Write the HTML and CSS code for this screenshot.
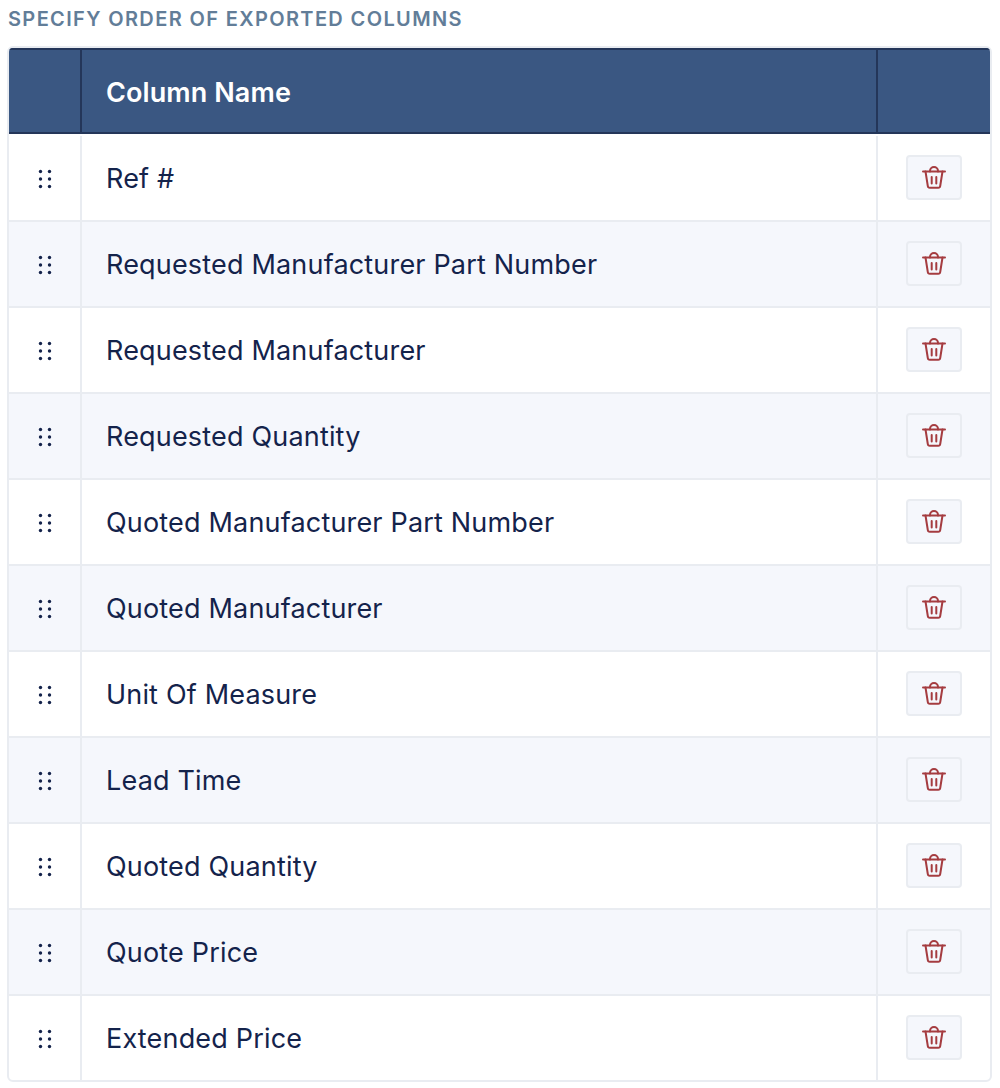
FILE: index.html
```html
<!DOCTYPE html>
<html lang="en">
<head>
<meta charset="utf-8">
<title>Export columns</title>
<link rel="stylesheet" href="styles.css">
</head>
<body>
<svg class="defs" width="0" height="0" aria-hidden="true">
  <symbol id="grip" viewBox="0 0 14 20"><g fill="#14234b"><circle cx="2.5" cy="2.5" r="1.7"/><circle cx="11.5" cy="2.5" r="1.7"/><circle cx="2.5" cy="10" r="1.7"/><circle cx="11.5" cy="10" r="1.7"/><circle cx="2.5" cy="17.5" r="1.7"/><circle cx="11.5" cy="17.5" r="1.7"/></g></symbol>
  <symbol id="trash" viewBox="0 0 24 24"><g fill="none" stroke="#a53c40" stroke-width="2" stroke-linecap="round" stroke-linejoin="round"><path d="M1 5.5h22"/><path d="M3.5 5.5L5.8 20a2 2 0 0 0 2 1.8h8.4a2 2 0 0 0 2-1.8L20.5 5.5"/><path d="M8 5.5V5a4 4 0 0 1 8 0v.5"/><path d="M9.7 11v6.5M14.3 11v6.5"/></g></symbol>
</svg>
<h2 class="title">SPECIFY ORDER OF EXPORTED COLUMNS</h2>
<div class="card">
  <div class="row head">
    <div class="cell grip"></div>
    <div class="cell name">Column Name</div>
    <div class="cell action"></div>
  </div>
  <div class="row"><div class="cell grip"><svg class="i-grip"><use href="#grip"/></svg></div><div class="cell name">Ref #</div><div class="cell action"><button class="del" aria-label="Delete"><svg class="i-trash"><use href="#trash"/></svg></button></div></div>
  <div class="row"><div class="cell grip"><svg class="i-grip"><use href="#grip"/></svg></div><div class="cell name">Requested Manufacturer Part Number</div><div class="cell action"><button class="del" aria-label="Delete"><svg class="i-trash"><use href="#trash"/></svg></button></div></div>
  <div class="row"><div class="cell grip"><svg class="i-grip"><use href="#grip"/></svg></div><div class="cell name">Requested Manufacturer</div><div class="cell action"><button class="del" aria-label="Delete"><svg class="i-trash"><use href="#trash"/></svg></button></div></div>
  <div class="row"><div class="cell grip"><svg class="i-grip"><use href="#grip"/></svg></div><div class="cell name">Requested Quantity</div><div class="cell action"><button class="del" aria-label="Delete"><svg class="i-trash"><use href="#trash"/></svg></button></div></div>
  <div class="row"><div class="cell grip"><svg class="i-grip"><use href="#grip"/></svg></div><div class="cell name">Quoted Manufacturer Part Number</div><div class="cell action"><button class="del" aria-label="Delete"><svg class="i-trash"><use href="#trash"/></svg></button></div></div>
  <div class="row"><div class="cell grip"><svg class="i-grip"><use href="#grip"/></svg></div><div class="cell name">Quoted Manufacturer</div><div class="cell action"><button class="del" aria-label="Delete"><svg class="i-trash"><use href="#trash"/></svg></button></div></div>
  <div class="row"><div class="cell grip"><svg class="i-grip"><use href="#grip"/></svg></div><div class="cell name">Unit Of Measure</div><div class="cell action"><button class="del" aria-label="Delete"><svg class="i-trash"><use href="#trash"/></svg></button></div></div>
  <div class="row"><div class="cell grip"><svg class="i-grip"><use href="#grip"/></svg></div><div class="cell name">Lead Time</div><div class="cell action"><button class="del" aria-label="Delete"><svg class="i-trash"><use href="#trash"/></svg></button></div></div>
  <div class="row"><div class="cell grip"><svg class="i-grip"><use href="#grip"/></svg></div><div class="cell name">Quoted Quantity</div><div class="cell action"><button class="del" aria-label="Delete"><svg class="i-trash"><use href="#trash"/></svg></button></div></div>
  <div class="row"><div class="cell grip"><svg class="i-grip"><use href="#grip"/></svg></div><div class="cell name">Quote Price</div><div class="cell action"><button class="del" aria-label="Delete"><svg class="i-trash"><use href="#trash"/></svg></button></div></div>
  <div class="row"><div class="cell grip"><svg class="i-grip"><use href="#grip"/></svg></div><div class="cell name">Extended Price</div><div class="cell action"><button class="del" aria-label="Delete"><svg class="i-trash"><use href="#trash"/></svg></button></div></div>
</div>
</body>
</html>
```
FILE: styles.css
```css
html, body { margin: 0; padding: 0; background: #fff; }
body { padding: 8px 8px 0 7px; font-family: Inter, "Liberation Sans", sans-serif; color: #14234b; }
.defs { position: absolute; }
.title { margin: 0 0 16px 1px; font-size: 20px; line-height: 22px; font-weight: 600; letter-spacing: 1.36px; color: #627d98; }
.card { border: 2px solid #e9ecf1; border-radius: 6px; overflow: hidden; background: #fff; width: 981px; }
.row { display: grid; grid-template-columns: 73px 796px 112px; height: 84px; border-bottom: 2px solid #e9ecf1; }
.row:nth-child(odd) { background: #f5f7fc; }
.row:last-child { border-bottom: 0; }
.cell { display: flex; align-items: center; border-right: 2px solid #e9ecf1; font-size: 27px; letter-spacing: 0.18px; }
.cell.action { border-right: 0; justify-content: center; padding-bottom: 1px; }
.cell.grip { justify-content: center; padding-top: 2px; }
.cell.name { padding-left: 24px; }
.row.head { background: #3a5782; height: 82px; border-top: 2px solid #243659; border-bottom: 2px solid #243659; margin-bottom: 2px; }
.head .cell { border-right-color: #243659; color: #fff; font-weight: 600; padding-top: 2px; letter-spacing: 0.1px; }
.i-grip { width: 14px; height: 20px; display: block; }
.i-trash { width: 24px; height: 24px; display: block; }
.del { width: 56px; height: 45px; padding: 0; display: flex; align-items: center; justify-content: center; background: #f5f7fc; border: 2px solid #e9ecf1; border-radius: 4px; }
```
